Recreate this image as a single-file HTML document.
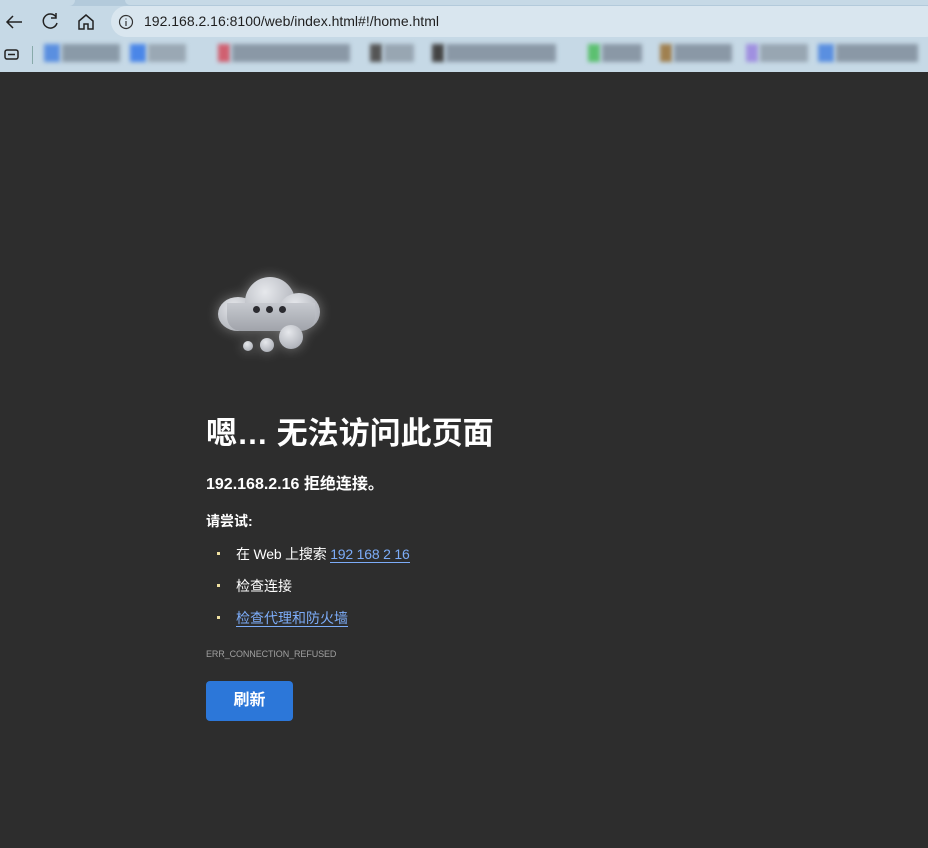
<!DOCTYPE html>
<html><head><meta charset="utf-8"><style>
*{margin:0;padding:0;box-sizing:border-box}
body{width:928px;height:848px;overflow:hidden;background:#2d2d2d;font-family:"Liberation Sans","Noto Sans CJK SC",sans-serif;position:relative}
#chrome{position:absolute;left:0;top:0;width:928px;height:72px;background:#c6d9e6}
#tabline{position:absolute;left:0;top:0;width:928px;height:6px;background:#b3cadb}
#tab{position:absolute;left:0;top:0;width:75px;height:6px;background:#c6d9e6;border-radius:0 0 6px 0}
#tab2{position:absolute;left:125px;top:0;width:803px;height:5px;background:#c6d9e6;border-radius:0 0 0 6px}
#addr{position:absolute;left:111px;top:6px;width:830px;height:31px;background:#d9e6ef;border-radius:16px}
#url{position:absolute;left:144px;top:13px;font-size:14px;color:#1f1f1f}
.blk{position:absolute;top:44px;height:18px;filter:blur(2px)}
#content{position:absolute;left:0;top:72px;width:928px;height:776px;background:#2d2d2d}
h1{position:absolute;left:206px;top:408px;font-size:31px;color:#fff;font-weight:bold;white-space:nowrap}
.t{position:absolute;color:#fff;white-space:nowrap}
a{color:#7cacf8;text-decoration:none;border-bottom:1px solid #7cacf8}
.dot{position:absolute;width:3px;height:3px;background:#f0e0a0;left:217px}
#btn{position:absolute;left:206px;top:681px;width:87px;height:40px;background:#2c77d9;border-radius:4px;color:#fff;font-size:16px;font-weight:bold;text-align:center;line-height:40px}
.c{position:absolute;border-radius:50%;background:radial-gradient(circle at 40% 30%,#e6e8ec,#b4b7be 70%,#8d9098)}
</style></head><body>
<div id="chrome">
<div id="tabline"></div><div id="tab"></div><div id="tab2"></div>
<svg style="position:absolute;left:4px;top:12px" width="20" height="20" viewBox="0 0 20 20" fill="none" stroke="#222" stroke-width="1.5"><path d="M18 10H3M9 4L3 10l6 6"/></svg>
<svg style="position:absolute;left:40px;top:11px" width="20" height="20" viewBox="0 0 20 20" fill="none" stroke="#222" stroke-width="1.5"><path d="M16 6A7 7 0 1 0 17 12"/><path d="M16 2v5h-5"/></svg>
<svg style="position:absolute;left:76px;top:12px" width="20" height="20" viewBox="0 0 20 20" fill="none" stroke="#222" stroke-width="1.5"><path d="M3 9L10 3l7 6v8h-5v-5H8v5H3z"/></svg>
<div id="addr"></div>
<svg style="position:absolute;left:118px;top:14px" width="16" height="16" viewBox="0 0 16 16" fill="none" stroke="#333" stroke-width="1.2"><circle cx="8" cy="8" r="6.5"/><path d="M8 7v5M8 4.5v1"/></svg>
<div id="url">192.168.2.16:8100/web/index.html#!/home.html</div>
<svg style="position:absolute;left:4px;top:48px" width="16" height="14" viewBox="0 0 16 14" fill="none" stroke="#222" stroke-width="1.5"><rect x="1" y="2" width="13" height="9" rx="2"/><path d="M4 6.5h7"/></svg>
<div style="position:absolute;left:32px;top:46px;width:1px;height:18px;background:#8aa"></div>
<div class="blk" style="left:44px;width:16px;background:#5a8fe0"></div><div class="blk" style="left:62px;width:58px;background:#8a9aa8"></div>
<div class="blk" style="left:130px;width:16px;background:#4a86e8"></div><div class="blk" style="left:148px;width:38px;background:#9aa8b4"></div>
<div class="blk" style="left:218px;width:12px;background:#d06070"></div><div class="blk" style="left:232px;width:118px;background:#8a98a6"></div>
<div class="blk" style="left:370px;width:12px;background:#555"></div><div class="blk" style="left:384px;width:30px;background:#98a6b2"></div>
<div class="blk" style="left:432px;width:12px;background:#444"></div><div class="blk" style="left:446px;width:110px;background:#8a98a6"></div>
<div class="blk" style="left:588px;width:12px;background:#5cc070"></div><div class="blk" style="left:602px;width:40px;background:#8a98a6"></div>
<div class="blk" style="left:660px;width:12px;background:#a08050"></div><div class="blk" style="left:674px;width:58px;background:#8a98a6"></div>
<div class="blk" style="left:746px;width:12px;background:#a090e0"></div><div class="blk" style="left:760px;width:48px;background:#98a6b2"></div>
<div class="blk" style="left:818px;width:16px;background:#5a8fe0"></div><div class="blk" style="left:836px;width:82px;background:#8a98a6"></div>
</div>
<div id="content"></div>
<div style="position:absolute;left:215px;top:275px;width:110px;height:80px;filter:drop-shadow(0 0 6px rgba(255,255,255,.35))">
<div class="c" style="left:3px;top:22px;width:40px;height:34px"></div>
<div class="c" style="left:30px;top:2px;width:50px;height:50px"></div>
<div class="c" style="left:63px;top:18px;width:42px;height:38px"></div>
<div style="position:absolute;left:12px;top:28px;width:88px;height:28px;border-radius:0 0 14px 14px;background:linear-gradient(#c6c9cf,#a0a3aa)"></div>
<div class="c" style="left:64px;top:50px;width:24px;height:24px"></div>
<div class="c" style="left:45px;top:63px;width:14px;height:14px"></div>
<div class="c" style="left:28px;top:66px;width:10px;height:10px"></div>
<div style="position:absolute;left:38px;top:31px;width:7px;height:7px;border-radius:50%;background:#2b2b30"></div>
<div style="position:absolute;left:51px;top:31px;width:7px;height:7px;border-radius:50%;background:#2b2b30"></div>
<div style="position:absolute;left:64px;top:31px;width:7px;height:7px;border-radius:50%;background:#2b2b30"></div>
</div>
<h1>嗯… 无法访问此页面</h1>
<div class="t" style="left:206px;top:470px;font-size:16px;font-weight:bold">192.168.2.16 拒绝连接。</div>
<div class="t" style="left:206px;top:511px;font-size:14px;font-weight:bold">请尝试:</div>
<div class="dot" style="top:552px"></div>
<div class="t" style="left:236px;top:544px;font-size:14px;letter-spacing:-0.2px">在 Web 上搜索 <a>192 168 2 16</a></div>
<div class="dot" style="top:584px"></div>
<div class="t" style="left:236px;top:576px;font-size:14px">检查连接</div>
<div class="dot" style="top:616px"></div>
<div class="t" style="left:236px;top:608px;font-size:14px"><a>检查代理和防火墙</a></div>
<div class="t" style="left:206px;top:649px;font-size:9px;letter-spacing:-0.1px;color:#a0a0a0">ERR_CONNECTION_REFUSED</div>
<div id="btn">刷新</div>
</body></html>
